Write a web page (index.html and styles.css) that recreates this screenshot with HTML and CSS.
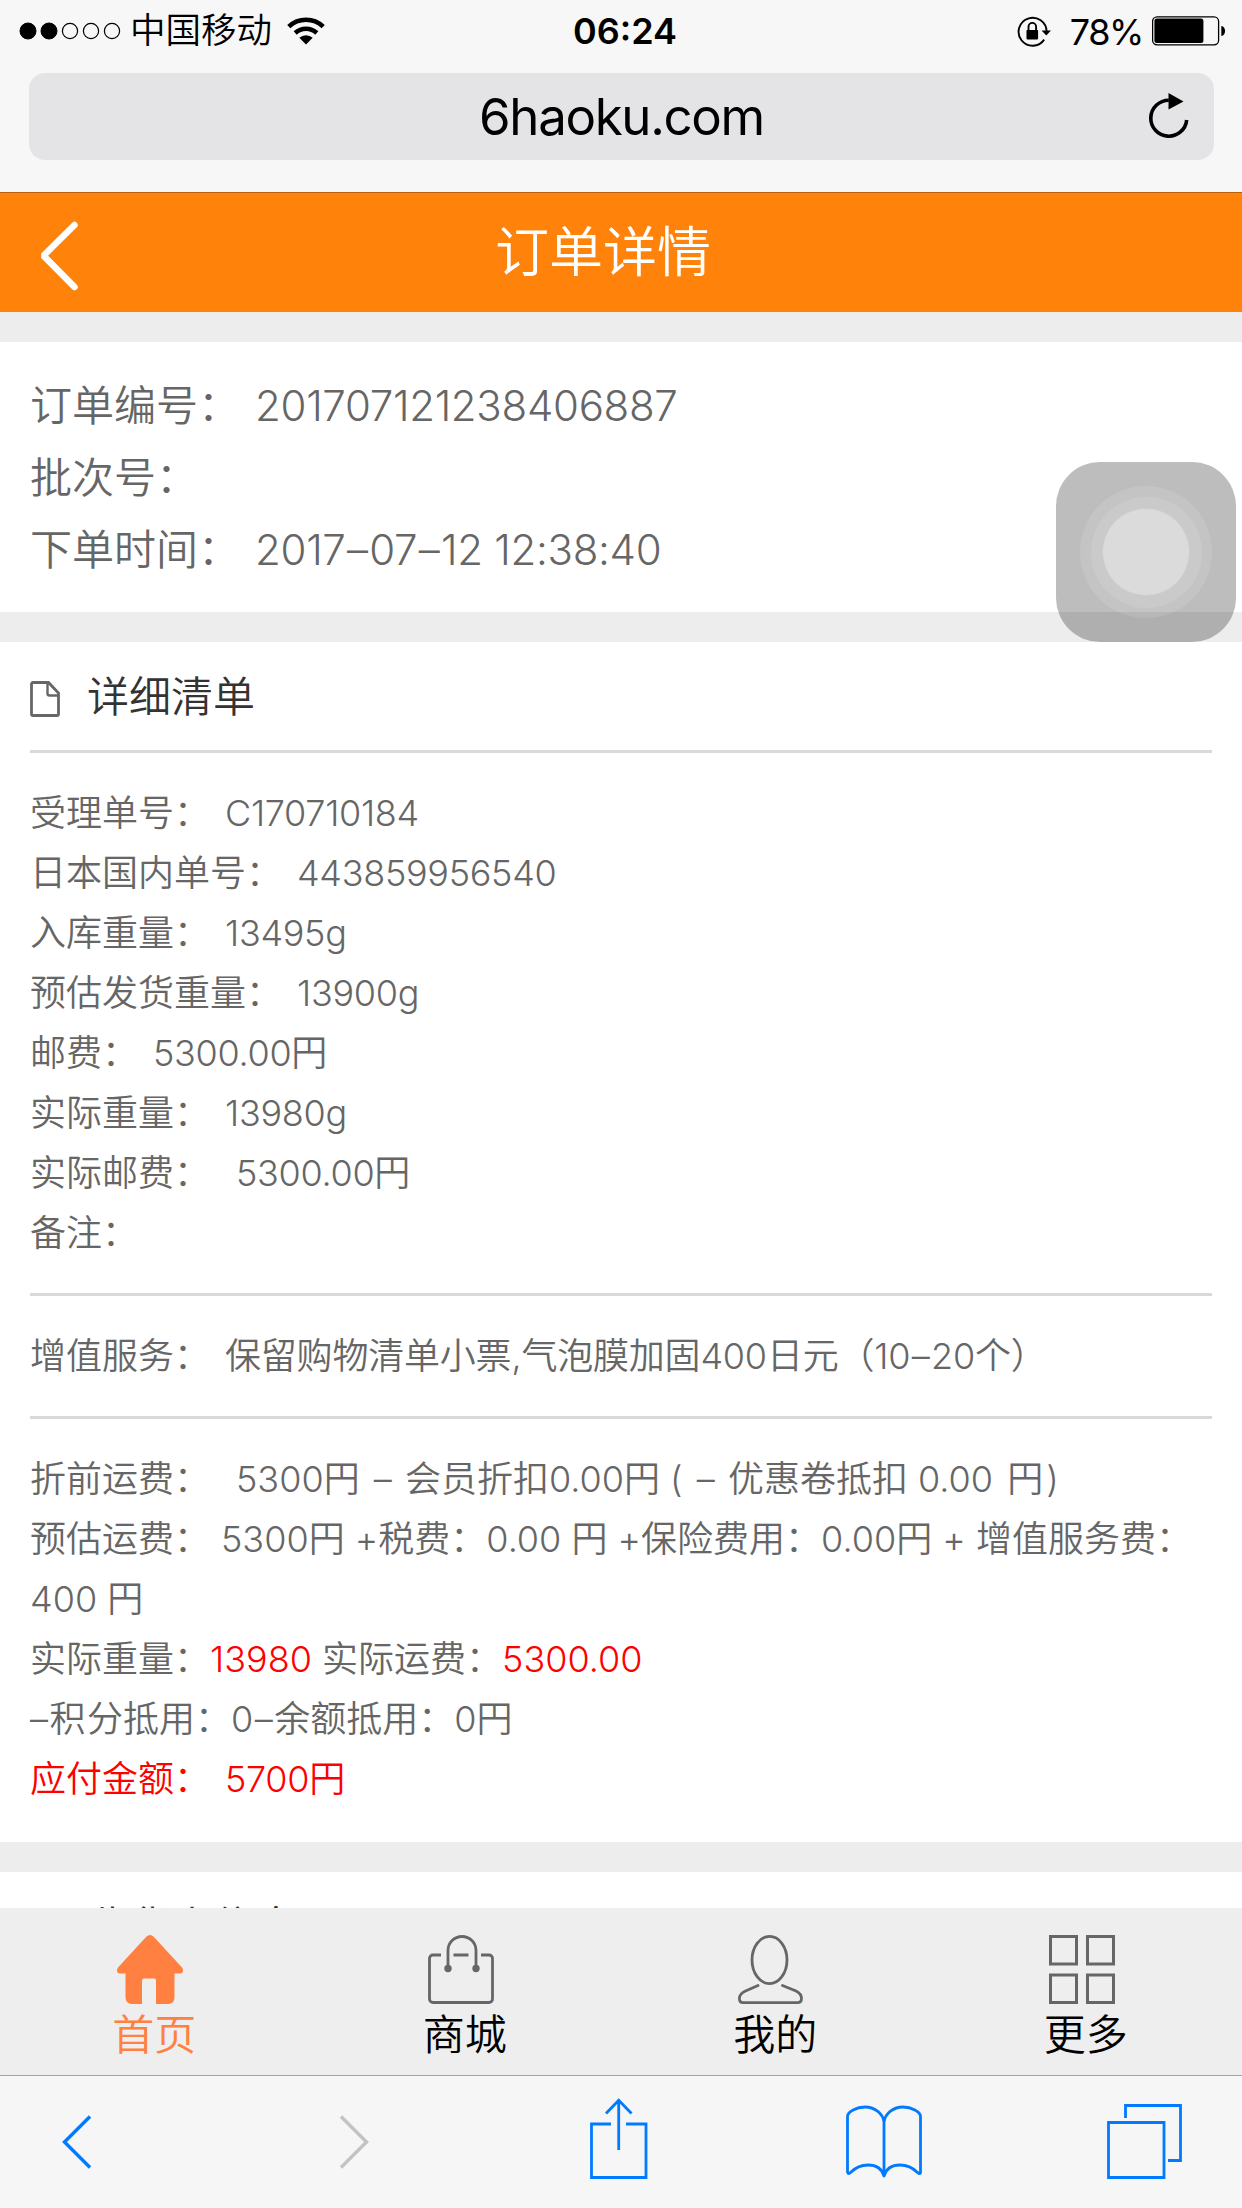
FILE: index.html
```html
<!DOCTYPE html>
<html lang="zh-CN">
<head>
<meta charset="utf-8">
<title>订单详情</title>
<link rel="stylesheet" href="styles.css">
</head>
<body>
<div class="phone">
  <div class="statusbar">
    <div class="status-left">
      <svg class="signal" width="102" height="18" viewBox="0 0 102 18"><g stroke="#000"><circle cx="9" cy="9" r="8"/><circle cx="30" cy="9" r="8"/><g fill="none" stroke-width="1.2"><circle cx="51" cy="9" r="7.6"/><circle cx="72" cy="9" r="7.6"/><circle cx="93" cy="9" r="7.6"/></g></g></svg>
      <span class="carrier">中国移动</span>
      <svg class="wifi" width="38" height="28" viewBox="0 0 38 28"><g fill="none" stroke="#000" stroke-width="4.600"><path d="M1.800 9.600a25 25 0 0 1 34.400 0"/><path d="M8.200 16a16 16 0 0 1 21.600 0"/></g><path d="M19 27.500l-6.700-6.700a9.800 9.800 0 0 1 13.400 0z"/></svg>
    </div>
    <div class="clock">06:24</div>
    <div class="status-right">
      <svg class="lock" width="34" height="31" viewBox="0 0 34 31"><path d="M27.200 23.600a14 14 0 1 1 2.400-8" fill="none" stroke="#000" stroke-width="1.900"/><path d="M24.600 14.400h9.400l-4.700 5z"/><rect x="9.500" y="14" width="11.600" height="9.400" rx=".8"/><path d="M11.500 14.500v-3.600a3.800 4 0 0 1 7.600 0v3.600" fill="none" stroke="#000" stroke-width="1.900"/></svg>
      <span class="percent">78%</span>
      <svg class="battery" width="74" height="30" viewBox="0 0 74 30"><rect x=".6" y=".8" width="66" height="28" rx="4.500" fill="none" stroke="#000" stroke-width="1.300"/><rect x="2.400" y="2.600" width="49" height="24.400" rx="2.500"/><path d="M69.300 10c5 .5 5 9.500 0 10z"/></svg>
    </div>
  </div>
  <div class="addressbar">
    <div class="address">
      <span class="domain">6haoku.com</span>
      <svg class="reload" width="42" height="48" viewBox="0 0 42 48"><path d="M20.800 8.200A18 18 0 1 0 38.700 28" fill="none" stroke="#000" stroke-width="3.600"/><path d="M20.500 1l15 8.400-15 8.200z"/></svg>
    </div>
  </div>

  <header class="header">
    <svg class="back" width="42" height="72" viewBox="0 0 42 72"><path d="M36.500 5L5.500 35.700 36.500 67" fill="none" stroke="#fff" stroke-width="6.500" stroke-linecap="round" stroke-linejoin="bevel"/></svg>
    <h1 class="title">订单详情</h1>
  </header>

  <main class="content">
    <section class="card order">
      <p>订单编号：<span class="value">201707121238406887</span></p>
      <p>批次号：</p>
      <p>下单时间：<span class="value">2017<i>–</i>07<i>–</i>12 12:38:40</span></p>
    </section>

    <section class="card">
      <h2 class="card-title">
        <svg class="doc" width="30" height="36" viewBox="0 0 30 36"><path d="M3 1.500h15.500L28.500 12v21a1.500 1.500 0 0 1-1.500 1.500H3A1.500 1.500 0 0 1 1.500 33V3A1.500 1.500 0 0 1 3 1.500z" fill="none" stroke="#666" stroke-width="2.800"/><path d="M17.500 2v10.500a2 2 0 0 0 2 2H28" fill="none" stroke="#666" stroke-width="2.400"/></svg>
        <span>详细清单</span>
      </h2>
      <div class="group">
        <p>受理单号：<span class="value">C170710184</span></p>
        <p>日本国内单号：<span class="value">443859956540</span></p>
        <p>入库重量：<span class="value">13495g</span></p>
        <p>预估发货重量：<span class="value">13900g</span></p>
        <p>邮费：<span class="value">5300.00円</span></p>
        <p>实际重量：<span class="value">13980g</span></p>
        <p>实际邮费：<span class="value wide">5300.00円</span></p>
        <p>备注：</p>
      </div>
      <div class="group">
        <p>增值服务：<span class="value service">保留购物清单小票,气泡膜加固400日元（10<i>–</i>20个）</span></p>
      </div>
      <div class="group">
        <p>折前运费：<span class="wide">5300円 <i class="minus">–</i> 会员折扣0.00円 ( <i class="minus">–</i> 优惠卷抵扣 0.00 <i class="unit">円</i>)</span></p>
        <p>预估运费：<span class="tight">5300円 +税费：0.00 円 +保险费用：0.00円 + 增值服务费：</span><br>400 円</p>
        <p>实际重量：<em>13980</em> 实际运费：<em>5300.00</em></p>
        <p>–<i>积</i>分抵用：0<i>–</i>余额抵用：0円</p>
        <p class="due">应付金额：<span class="value">5700円</span></p>
      </div>
    </section>

    <section class="card">
      <h2 class="card-title receiver"><span>收货人信息</span></h2>
    </section>
  </main>

  <nav class="tabs">
    <a class="tab active">
      <svg width="66" height="69" viewBox="0 0 66 69"><path d="M29.500 1.500Q33-1.500 36.500 1.500L65 32.500Q66 34 66 35.500 66 38.500 63 38.500H57.500V62Q57.500 69 51 69H39V45.500Q39 43.500 37 43.500H27Q25 43.500 25 45.500V69H15Q8.500 69 8.500 62V38.500H3Q0 38.500 0 35.500 0 34 1 32.500z" fill="#ff8040"/></svg>
      <span>首页</span>
    </a>
    <a class="tab">
      <svg width="66" height="69" viewBox="0 0 66 69"><g fill="none" stroke="#666" stroke-width="2.800"><path d="M13 20H5a3.500 3.500 0 0 0-3.500 3.500V64A3.500 3.500 0 0 0 5 67.500H61A3.500 3.500 0 0 0 64.500 64V23.500A3.500 3.500 0 0 0 61 20H53M25.500 20H40.500"/><path d="M20 33V15.500a14 14 0 0 1 28 0V33"/></g><circle cx="20" cy="33.500" r="3.700" fill="#666"/><circle cx="48" cy="33.500" r="3.700" fill="#666"/></svg>
      <span>商城</span>
    </a>
    <a class="tab">
      <svg width="66" height="69" viewBox="0 0 66 69"><g fill="none" stroke="#666" stroke-width="2.800" stroke-linecap="round"><ellipse cx="31.500" cy="25" rx="17.500" ry="23.600"/><path d="M20 50.500L7.500 56C3 58 1.400 60 1.400 63.500 1.400 66 2.500 67.600 5 67.600H59.500C62.500 67.600 63.500 66 63.500 63.500 63.500 60 62 58 58 56L44.500 50.500"/></g></svg>
      <span>我的</span>
    </a>
    <a class="tab">
      <svg width="66" height="69" viewBox="0 0 66 69"><g fill="none" stroke="#666" stroke-width="3"><rect x="1.500" y="1.500" width="26" height="27.500"/><rect x="38.500" y="1.500" width="26" height="27.500"/><rect x="1.500" y="40" width="26" height="27.500"/><rect x="38.500" y="40" width="26" height="27.500"/></g></svg>
      <span>更多</span>
    </a>
  </nav>

  <div class="toolbar">
    <svg width="30" height="54" viewBox="0 0 30 54"><path d="M28 1.500L2.500 27 28 52.500" fill="none" stroke="#007aff" stroke-width="3.400"/></svg>
    <svg class="forward" width="30" height="54" viewBox="0 0 30 54"><path d="M2 1.500L27.500 27 2 52.500" fill="none" stroke="#c3c3c3" stroke-width="3.400"/></svg>
    <svg class="share" width="58" height="82" viewBox="0 0 58 82"><path d="M21 26H1.500V79.500H56V26H36M28.700 52V2M16 15.500L28.700 2.300 41.500 15.500" fill="none" stroke="#007aff" stroke-width="2.800"/></svg>
    <svg class="book" width="76" height="74" viewBox="0 0 76 74"><path d="M38 71V17C37 8 28 2 19 2 10 2 2 7 1.500 11V67C2 69.500 3 68.500 4.500 67.500 9 63 15 60 22 60 31 60 36 64 38 71 40 64 45 60 54 60 61 60 67 63 71.500 67.500 73 68.500 74.500 69.500 74.500 67V11C74 7 66 2 57 2 48 2 39 8 38 17" fill="none" stroke="#007aff" stroke-width="2.800" stroke-linejoin="round"/></svg>
    <svg class="pages" width="76" height="76" viewBox="0 0 76 76"><path d="M1.500 18.500H57V73.500H1.500zM18.500 14V1.500H73.500V56.500H61" fill="none" stroke="#007aff" stroke-width="2.800"/></svg>
  </div>

  <div class="assistive"><div class="ring"><div class="ring-mid"><div class="ring-core"></div></div></div></div>
</div>
</body>
</html>
```
FILE: styles.css
```css
* { box-sizing: border-box; }
body {
  margin: 0;
  font-family: Inter, "Noto Sans CJK SC", sans-serif;
  font-weight: 350;
  color: #666;
  background: #ededed;
}
p, h1, h2 { margin: 0; font-weight: inherit; }
svg { display: block; flex: none; }
i { margin: 0 1.5px; font-style: normal; }

.phone {
  position: relative;
  width: 1242px;
  height: 2208px;
  display: flex;
  flex-direction: column;
  overflow: hidden;
}

.statusbar {
  height: 60px;
  display: grid;
  grid-template-columns: 1fr auto 1fr;
  padding: 0 16px 0 19px;
  background: #f7f7f7;
  color: #000;
  font-size: 36px;
  line-height: 60px;
}
.status-left, .status-right { display: flex; align-items: center; }
.status-right { justify-content: flex-end; }
.carrier { margin-left: 9px; font-size: 35.5px; }
.wifi { margin-left: 15px; }
.clock { font-weight: 600; padding: 1px 0 0 5px; }
.percent { margin: 2px 9px 0 19px; font-weight: 400; letter-spacing: -0.04em; }

.addressbar {
  height: 132px;
  padding: 13px 28px 0 29px;
  background: #f7f7f7;
}
.address {
  height: 87px;
  display: grid;
  grid-template-columns: 68px 1fr 68px;
  align-items: center;
  border-radius: 16px;
  background: #e4e4e6;
  color: #000;
}
.domain {
  grid-column: 2;
  text-align: center;
  font-size: 51px;
  font-weight: 400;
  letter-spacing: -0.026em;
}
.reload { margin: 0 0 2px 2px; }

.header {
  height: 120px;
  flex: none;
  display: grid;
  grid-template-columns: 82px 1fr 118px;
  align-items: center;
  border-top: 1px solid #b8610b;
  background: #ff830a;
  color: #fff;
}
.back { margin: 7px 0 0 38px; }
.title { text-align: center; font-size: 54px; line-height: 118px; }

.content { height: 1596px; flex: none; overflow: hidden; padding-top: 30px; }
.card { margin-bottom: 30px; padding: 0 30px; background: #fff; }
.order { height: 270px; padding-top: 28px; font-size: 42px; line-height: 72px; }
.card-title {
  height: 111px;
  display: flex;
  align-items: center;
  gap: 27px;
  padding-bottom: 5px;
  border-bottom: 3px solid #d9d9d9;
  font-size: 42px;
  color: #333;
}
.doc { margin-top: 10px; }
.receiver { padding-left: 57px; }
.group {
  padding: 30px 0 30px;
  border-bottom: 3px solid #d9d9d9;
  font-size: 36px;
  line-height: 60px;
  white-space: nowrap;
}
.group:last-child { border-bottom: 0; padding-bottom: 33px; }
.value { margin-left: 15px; letter-spacing: -0.3px; }
.service { letter-spacing: -0.2px; }
.wide { margin-left: 26px; }
.tight { margin-left: 11px; }
.minus { margin: 0 3px 0 4px; }
.unit { margin: 0 3px 0 4px; }
em, .due { font-style: normal; color: #f00; }

.tabs {
  height: 167px;
  flex: none;
  display: grid;
  grid-template-columns: repeat(4, 1fr);
  background: #eee;
}
.tab {
  display: flex;
  flex-direction: column;
  align-items: center;
  padding: 27px 2px 0 0;
  color: #000;
  font-size: 42px;
  line-height: 62px;
}
.tab svg { margin-right: 8px; }
.tab.active { color: #ff8040; }

.toolbar {
  height: 133px;
  flex: none;
  display: flex;
  align-items: center;
  padding: 0 0 0 62px;
  border-top: 1px solid #a5a5a5;
  background: #f6f6f6;
}
.forward { margin-left: 247px; }
.share { margin: 0 0 7px 221px; }
.book { margin-left: 198px; }
.pages { margin-left: 185px; }

.assistive {
  position: absolute;
  left: 1056px;
  top: 462px;
  width: 180px;
  height: 180px;
  border-radius: 44px;
  background: rgba(0, 0, 0, 0.26);
}
.assistive, .ring, .ring-mid { display: flex; align-items: center; justify-content: center; }
.ring { width: 132px; height: 132px; border-radius: 50%; background: rgba(255, 255, 255, 0.11); }
.ring-mid { width: 113px; height: 113px; border-radius: 50%; background: rgba(255, 255, 255, 0.11); border: 1px solid rgba(0, 0, 0, 0.03); }
.ring-core { width: 88px; height: 88px; border-radius: 50%; background: rgba(255, 255, 255, 0.32); border: 1px solid rgba(0, 0, 0, 0.06); }
```
